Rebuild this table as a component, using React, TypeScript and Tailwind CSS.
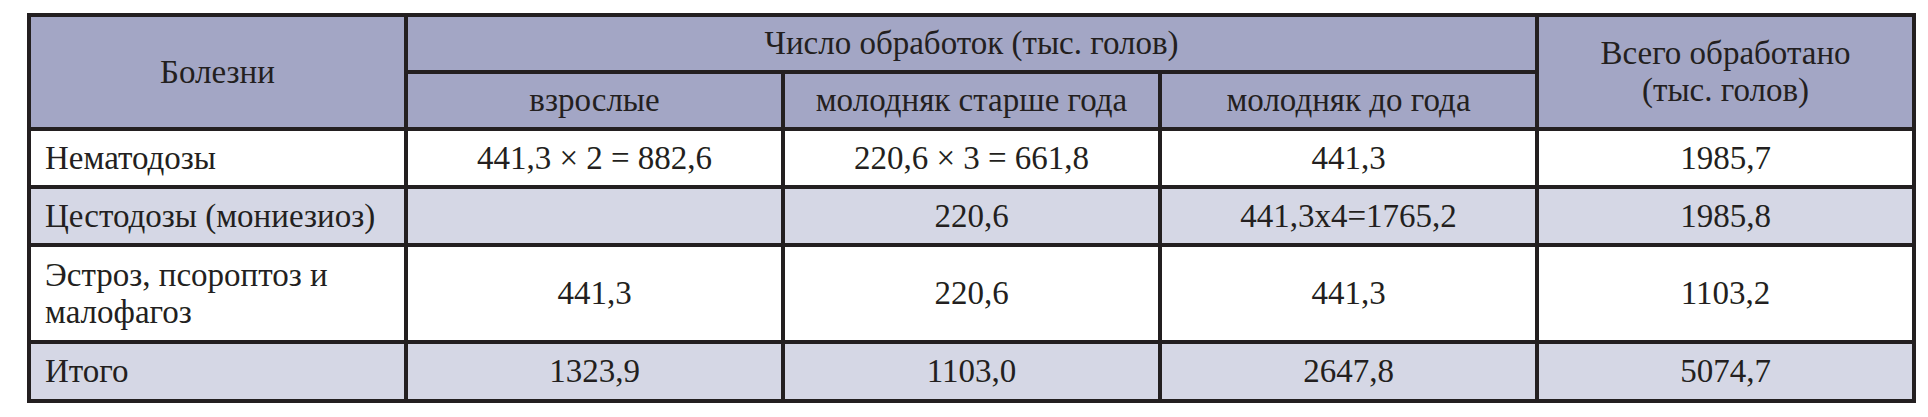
const rows = [
  { name: "Нематодозы", a: "441,3 × 2 = 882,6", b: "220,6 × 3 = 661,8", c: "441,3", total: "1985,7", h: "h-[58px]", tint: false },
  { name: "Цестодозы (мониезиоз)", a: "", b: "220,6", c: "441,3x4=1765,2", total: "1985,8", h: "h-[58px]", tint: true },
  { name: "Эстроз, псороптоз и малофагоз", a: "441,3", b: "220,6", c: "441,3", total: "1103,2", h: "h-[97px]", tint: false },
  { name: "Итого", a: "1323,9", b: "1103,0", c: "2647,8", total: "5074,7", h: "h-[59px]", tint: true },
];

const cell = "border-[4px] border-[#231f20] text-center align-middle";

export default function App() {
  return (
    <div className="bg-white w-[1928px] h-[417px] pt-[13px] pl-[27px] text-[#231f20] [font-family:Liberation_Serif,serif] text-[33px] leading-[37px]">
      <table className="table-fixed border-collapse w-[1889px]">
        <colgroup>
          <col className="w-[377px]" />
          <col className="w-[377px]" />
          <col className="w-[377px]" />
          <col className="w-[377px]" />
          <col className="w-[377px]" />
        </colgroup>
        <thead>
          <tr className="h-[57px] bg-[#a3a6c5]">
            <th rowSpan={2} className={`${cell} font-normal`}>
              Болезни
            </th>
            <th colSpan={3} className={`${cell} font-normal`}>
              Число обработок (тыс. голов)
            </th>
            <th rowSpan={2} className={`${cell} font-normal`}>
              Всего обработано
              <br />
              (тыс. голов)
            </th>
          </tr>
          <tr className="h-[57px] bg-[#a3a6c5]">
            <th className={`${cell} font-normal`}>взрослые</th>
            <th className={`${cell} font-normal`}>молодняк старше года</th>
            <th className={`${cell} font-normal`}>молодняк до года</th>
          </tr>
        </thead>
        <tbody>
          {rows.map((r) => (
            <tr key={r.name} className={`${r.h} ${r.tint ? "bg-[#d5d7e5]" : "bg-white"}`}>
              <td className="border-[4px] border-[#231f20] text-left align-middle pl-[14px] pr-[20px]">{r.name}</td>
              <td className={cell}>{r.a}</td>
              <td className={cell}>{r.b}</td>
              <td className={cell}>{r.c}</td>
              <td className={cell}>{r.total}</td>
            </tr>
          ))}
        </tbody>
      </table>
    </div>
  );
}
